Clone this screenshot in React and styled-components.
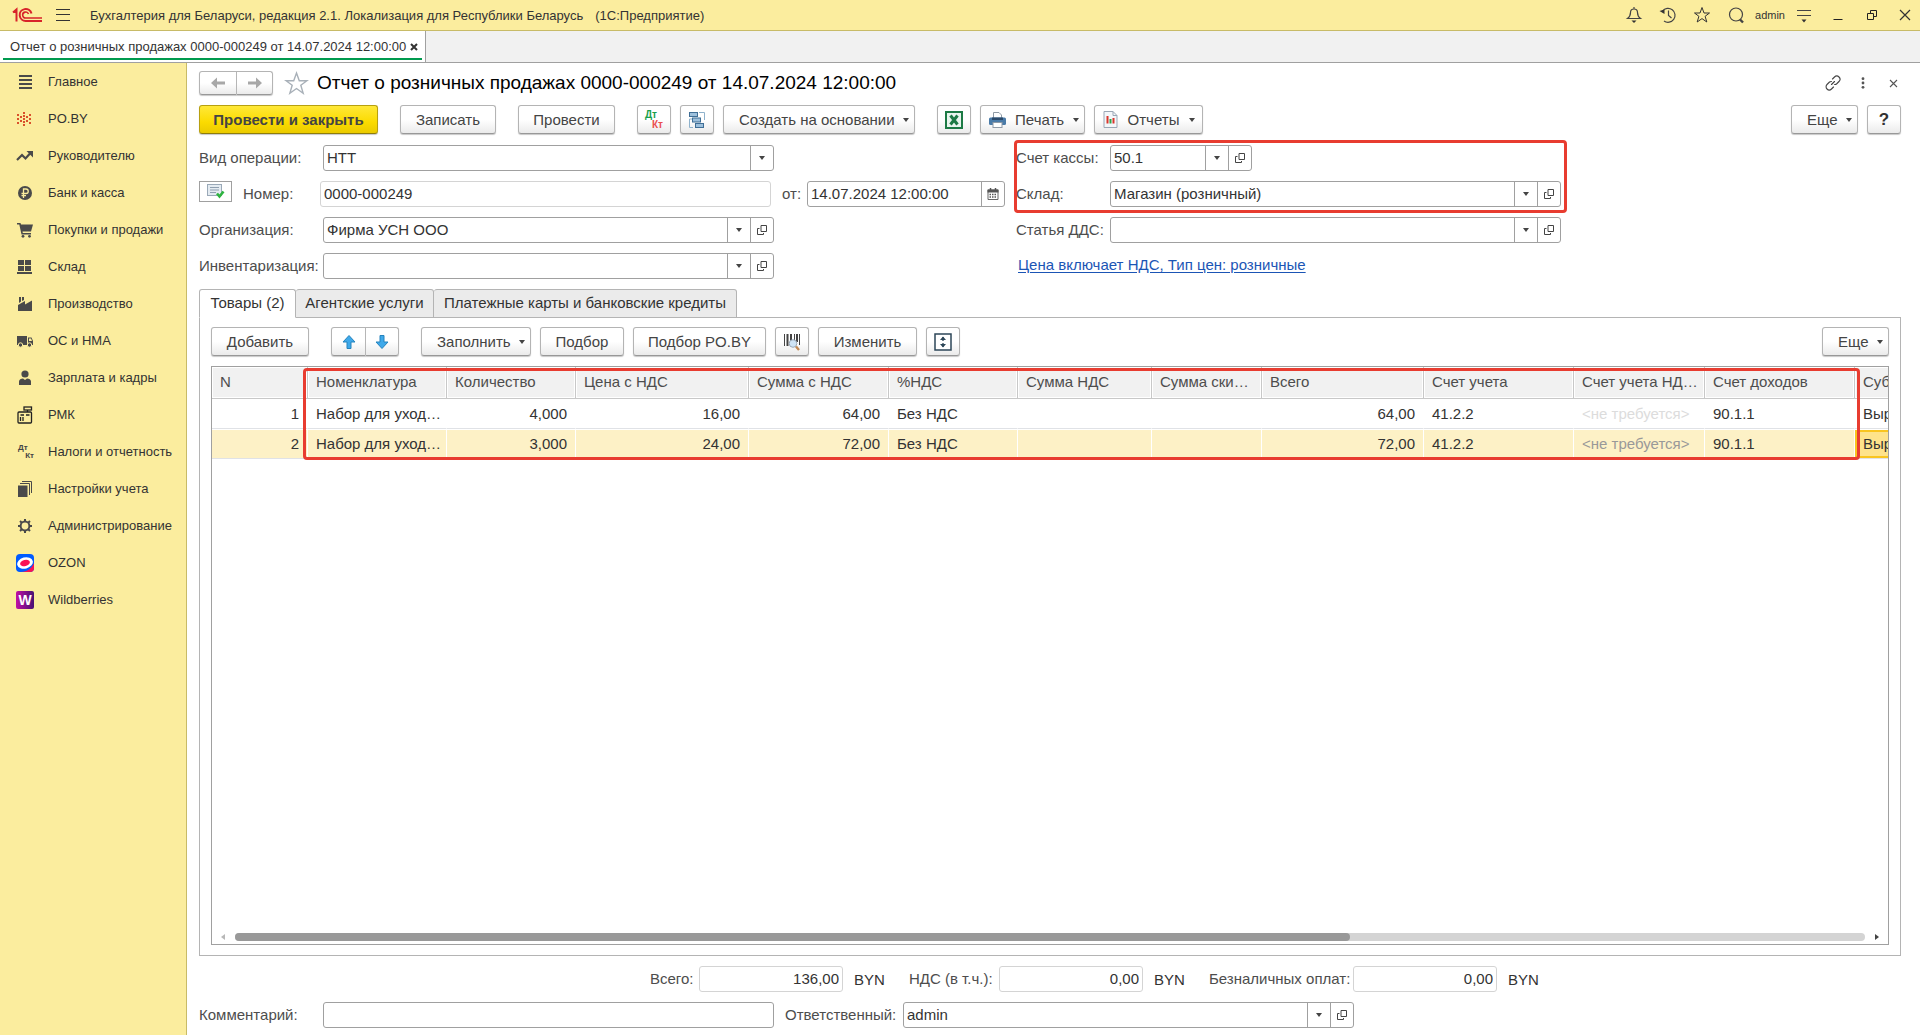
import React from 'react';
import styled, { createGlobalStyle, css } from 'styled-components';

const GlobalStyle = createGlobalStyle`
  *, *::before, *::after { box-sizing: border-box; }
  body {
    margin: 0;
    background: #fff;
    color: #333;
    font-family: "Liberation Sans", Arial, sans-serif;
    font-size: 15px;
  }
  button, input, select {
    font: inherit;
    color: inherit;
    margin: 0;
  }
  svg { display: block; flex: none; }
`;

const LINE = '#a0a0a0';
const YELLOW = '#fbed9e';
const RED = '#e83c30';

/* ---------- shell ---------- */

const Window = styled.div`
  display: flex;
  flex-direction: column;
  min-height: 100vh;
`;

const TitleBar = styled.header`
  display: flex;
  align-items: center;
  height: 31px;
  padding-left: 12px;
  background: ${YELLOW};
  border-bottom: 1px solid #c8bb67;
  font-size: 13px;
`;

const AppTitle = styled.div`
  display: flex;
  flex: 1;
  gap: 12px;
  padding-left: 10px;
  white-space: nowrap;
`;

const BarButton = styled.button`
  display: flex;
  align-items: center;
  justify-content: center;
  width: 34px;
  height: 30px;
  padding: 0;
  border: 0;
  background: none;
  font-size: 11px;
  &:last-child { width: 31px; }
`;

const MenuButton = styled(BarButton)`
  margin-left: 4px;
`;

const TabStrip = styled.nav`
  display: flex;
  height: 32px;
  background: #f1f1f1;
  border-bottom: 1px solid ${LINE};
`;

const DocTab = styled.div`
  display: flex;
  align-items: center;
  width: 426px;
  padding: 0 4px 0 7px;
  background: #fff;
  border-right: 1px solid ${LINE};
  font-size: 13px;
  white-space: nowrap;
  position: relative;
  &::after {
    content: '';
    position: absolute;
    left: 3px;
    right: 3px;
    bottom: 2px;
    height: 2px;
    background: #009a4e;
  }
`;

const DocTabLink = styled.a`
  flex: 1;
  padding-left: 3px;
  color: inherit;
  text-decoration: none;
`;

const GhostButton = styled.button`
  display: flex;
  align-items: center;
  justify-content: center;
  width: 16px;
  height: 20px;
  padding: 0;
  border: 0;
  background: none;
`;

const Body = styled.div`
  display: flex;
  flex: 1;
`;

const Sidebar = styled.nav`
  flex: none;
  width: 187px;
  background: ${YELLOW};
  border-right: 1px solid #c8bb67;
`;

const SideLink = styled.a`
  display: flex;
  align-items: center;
  gap: 14px;
  height: 37px;
  padding-left: 16px;
  color: #333;
  font-size: 13px;
  text-decoration: none;
  white-space: nowrap;
`;

const Main = styled.main`
  display: flex;
  flex: 1;
  flex-direction: column;
  gap: 10px;
  min-width: 0;
  padding: 8px 19px 7px 12px;
`;

/* ---------- header and toolbars ---------- */

const Heading = styled.div`
  display: flex;
  align-items: center;
  height: 24px;
`;

const Title = styled.h1`
  flex: 1;
  margin: 0;
  color: #000;
  font-size: 19px;
  font-weight: 400;
  white-space: nowrap;
`;

const StarButton = styled(GhostButton)`
  width: 28px;
  margin: 0 7px 0 9px;
`;

const HeadTools = styled.div`
  display: flex;
  gap: 14px;
`;

const Toolbar = styled.div`
  display: flex;
  gap: 22px;
  height: 29px;
`;

const Group = styled.div`
  display: flex;
  gap: 9px;
  margin-left: ${p => (p.$end ? 'auto' : '0')};
`;

const Button = styled.button`
  display: flex;
  align-items: center;
  justify-content: center;
  gap: ${p => (p.$icon ? '9px' : '8px')};
  width: ${p => p.$w || 34}px;
  height: ${p => p.$h || 29}px;
  padding: ${p => (p.$menu ? '0 7px 0 ' + (p.$icon ? '8px' : '15px') : '0')};
  border: 1px solid #b4b4b4;
  border-bottom-color: #989898;
  border-radius: 3px;
  background: linear-gradient(#fff 50%, #ebebeb);
  box-shadow: 0 1px 1px #c8c8c8;
  color: #444;
  white-space: nowrap;
  ${p => p.$menu && css`justify-content: space-between;`}
  ${p => p.$primary && css`
    border-color: #b7a010;
    border-bottom-color: #8f7d0a;
    background: linear-gradient(#ffe838, #fbdb00 60%, #ebcb00);
    font-weight: 700;
  `}
  ${p => p.$strong && css`font-weight: 700; font-size: 17px; color: #333;`}
`;

const Pair = styled.div`
  display: flex;
  ${Button}:first-child { border-radius: 3px 0 0 3px; }
  ${Button}:last-child { border-radius: 0 3px 3px 0; border-left: 0; }
`;

const Caret = styled.i`
  flex: none;
  border: 3px solid transparent;
  border-top: 4px solid #444;
  border-bottom: 0;
`;

/* ---------- form ---------- */

const Form = styled.form`
  display: grid;
  grid-template-columns: minmax(0, 806px) minmax(0, 545px);
  column-gap: 11px;
  margin-top: 1px;
`;

const Stack = styled.div`
  display: flex;
  flex-direction: column;
  gap: 10px;
`;

const Marked = styled(Stack)`
  position: relative;
  &::after {
    content: '';
    position: absolute;
    inset: -5px -6px -6px -2px;
    border: 3px solid ${RED};
    border-radius: 4px;
    pointer-events: none;
  }
`;

const Row = styled.div`
  display: flex;
  align-items: center;
  height: 26px;
  padding-left: ${p => p.$indent || 0}px;
`;

const Label = styled.label`
  flex: none;
  width: ${p => p.$w}px;
  padding-bottom: 1px;
  color: #4d4d4d;
  white-space: nowrap;
`;

const Field = styled.div`
  display: flex;
  flex: 0 1 ${p => p.$w || 451}px;
  min-width: 0;
  height: 26px;
  margin-right: ${p => (p.$gap ? '11px' : '0')};
  border: 1px solid ${p => (p.$soft ? '#d4d4d4' : LINE)};
  border-radius: 3px;
  background: #fff;
`;

const textBox = css`
  flex: 1;
  min-width: 0;
  width: 100%;
  padding: 0 3px 2px;
  border: 0;
  outline: 0;
  background: none;
  text-align: ${p => (p.$right ? 'right' : 'left')};
`;

const Input = styled.input`${textBox}`;

const Select = styled.select`
  ${textBox}
  appearance: none;
`;

const FieldButton = styled.button`
  display: flex;
  flex: none;
  align-items: center;
  justify-content: center;
  width: 23px;
  padding: 0 1px 0 0;
  border: 0;
  border-left: 1px solid ${LINE};
  background: none;
`;

const StatusButton = styled.button`
  display: flex;
  align-self: flex-start;
  align-items: center;
  justify-content: center;
  width: 33px;
  height: 21px;
  margin-right: 11px;
  padding: 0;
  border: 1px solid ${LINE};
  background: #fff;
`;

const PriceLink = styled.a`
  padding: 0 0 4px 2px;
  color: #1b55b5;
  text-underline-offset: 2px;
  white-space: nowrap;
`;

const Unit = styled.span`
  width: 55px;
`;

/* ---------- tabs and table ---------- */

const Section = styled.section`
  display: flex;
  flex: 1;
  flex-direction: column;
`;

const Tabs = styled.div`
  display: flex;
  height: 29px;
  margin-bottom: -1px;
`;

const Tab = styled.button`
  width: ${p => p.$w}px;
  padding: 0 0 2px;
  border: 1px solid #b4b4b4;
  border-left-width: ${p => (p.$active ? '1px' : '0')};
  border-bottom-color: ${p => (p.$active ? '#fff' : '#b4b4b4')};
  border-radius: 3px 3px 0 0;
  background: ${p => (p.$active ? '#fff' : '#ebebeb')};
  white-space: nowrap;
  z-index: 1;
`;

const Panel = styled.div`
  display: flex;
  flex: 1;
  flex-direction: column;
  gap: 10px;
  padding: 9px 11px 10px;
  border: 1px solid #b4b4b4;
`;

const Grid = styled.div`
  display: flex;
  flex: 1;
  flex-direction: column;
  justify-content: space-between;
  position: relative;
  border: 1px solid ${LINE};
`;

const Frame = styled.div`
  position: absolute;
  top: 1px;
  left: 91px;
  width: 1557px;
  height: 92px;
  border: 3px solid ${RED};
  border-radius: 4px;
  pointer-events: none;
`;

const Clip = styled.div`
  overflow: hidden;
  width: 0;
  min-width: 100%;
`;

const Table = styled.table`
  table-layout: fixed;
  width: 1763px;
  border-spacing: 0;
`;

const Th = styled.th`
  height: 32px;
  padding: 0 8px 2px;
  border-right: 1px solid #c8c8c8;
  border-bottom: 1px solid #c8c8c8;
  background: #f1f1f1;
  box-shadow: inset 0 0 0 1px #fff;
  color: #4d4d4d;
  font-weight: 400;
  text-align: left;
  white-space: nowrap;
`;

const Td = styled.td`
  height: 30px;
  padding: 0 8px 2px;
  border-top: 1px solid #fff;
  border-right: 1px solid #fff;
  border-bottom: 1px solid #e0e2e6;
  background: ${p => (p.$selected ? '#fdf1c6' : '#fff')};
  background-clip: padding-box;
  color: ${p => (p.$muted ? (p.$selected ? '#999' : '#dcdcdc') : '#333')};
  text-align: ${p => (p.$right ? 'right' : 'left')};
  white-space: nowrap;
  overflow: hidden;
  ${p => p.$current && css`
    background: #fee38b;
    box-shadow: inset 0 0 0 2px #f9c520;
  `}
`;

const Scroll = styled.div`
  display: flex;
  align-items: center;
  gap: 10px;
  height: 8px;
  margin: 0 9px 3px;
`;

const Track = styled.div`
  flex: 1;
  height: 8px;
  border-radius: 4px;
  background: #d4d4d4;
`;

const Thumb = styled.div`
  width: 68.4%;
  height: 8px;
  border-radius: 4px;
  background: #999;
`;

const Arrow = styled.i`
  border: 3px solid transparent;
  ${p => (p.$left
    ? css`border-right: 4px solid #b8b8b8; border-left: 0;`
    : css`border-left: 4px solid #444; border-right: 0;`)}
`;

const DtKt = styled.span`
  display: flex;
  flex-direction: column;
  width: 18px;
  padding-left: ${p => (p.$color ? 0 : 2)}px;
  font-size: ${p => (p.$color ? 10 : 8)}px;
  line-height: ${p => (p.$color ? 10 : 8)}px;
  font-weight: 700;
  color: ${p => (p.$color ? '#17a04c' : '#444')};
  text-align: left;
  b:last-child {
    align-self: flex-end;
    color: ${p => (p.$color ? '#ea5050' : '#444')};
  }
`;

/* ---------- icons ---------- */

const Svg = ({ s = 18, w, h, children, ...rest }) => (
  <svg width={w || s} height={h || s} viewBox={`0 0 ${w || s} ${h || s}`} fill="none" stroke="#444" aria-hidden="true" {...rest}>
    {children}
  </svg>
);

const Logo = () => (
  <Svg w={30} h={16} stroke="#d8232a" strokeWidth="2">
    <path d="M1 5.500 4.500 2.500V14.500M1.500 5H4" />
    <path d="M19.500 6.500A6 6 0 1 0 14 14H30" />
    <path d="M16.500 7A3 3 0 1 0 14 11H30" strokeWidth="1.600" />
  </Svg>
);

const Burger = () => (
  <Svg w={14} h={12} stroke="#333"><path d="M0 .5H14M0 5.500H14M0 11.500H14" /></Svg>
);

const Bell = () => (
  <Svg s={18} strokeWidth="1.200">
    <path d="M2.500 12.500C4.500 11 5.500 9.500 5.500 6.500 5.500 4.500 7 3 9 3S12.500 4.500 12.500 6.500C12.500 9.500 13.500 11 15.500 12.500ZM9 1V3" />
    <path d="M6.500 14.500H11.500L9 17Z" fill="#333" stroke="none" />
  </Svg>
);

const History = () => (
  <Svg s={18} strokeWidth="1.200">
    <path d="M3.500 5A7 7 0 1 1 5 15M9.500 4.500V9.500L12.500 12" />
    <path d="M.5 5 5.500 3.500V8Z" fill="#333" stroke="none" />
  </Svg>
);

const Star = ({ s = 18, color = '#333' }) => (
  <svg width={s} height={s} viewBox="0 0 18 18" fill="none" stroke={color} strokeWidth="1" aria-hidden="true">
    <path d="M9 1.500 11 7H16.500L12.100 10.300 13.800 16 9 12.600 4.200 16 5.900 10.300 1.500 7H7Z" />
  </svg>
);

const Search = () => (
  <Svg s={18}>
    <circle cx="9" cy="8.500" r="6.500" strokeWidth="1.200" />
    <path d="M13 13.500 16 16.500" strokeWidth="2.400" />
  </Svg>
);

const Settings = () => (
  <Svg w={16} h={16}>
    <path d="M1 3.500H15M1 8.500H15" strokeWidth="1.200" />
    <path d="M5.500 12.500H10.500L8 15.500Z" fill="#333" stroke="none" />
  </Svg>
);

const Minimize = () => <Svg s={12} stroke="#222"><path d="M1.500 10.500H10.500" /></Svg>;
const Restore = () => (
  <Svg s={12} stroke="#222"><path d="M1.500 4.500H7.500V10.500H1.500ZM4.500 4.500V1.500H10.500V7.500H7.500" /></Svg>
);
const Cross = ({ s = 12, sw = 1.2, color = '#333' }) => (
  <Svg s={s} stroke={color} strokeWidth={sw}><path d={`M1 1 ${s - 1} ${s - 1}M${s - 1} 1 1 ${s - 1}`} /></Svg>
);

const LinkIcon = () => (
  <Svg s={16} strokeWidth="1.100" strokeLinecap="round">
    <path d="M7.500 4 9.500 2A3 3 0 0 1 14 6.500L11.500 9A3 3 0 0 1 9.500 9.500M8.500 12 6.500 14A3 3 0 0 1 2 9.500L4.500 7A3 3 0 0 1 6.500 6.500M6.500 9.500 9.500 6.500" />
  </Svg>
);

const Dots = () => (
  <Svg w={4} h={12} fill="#555" stroke="none">
    <circle cx="2" cy="1.700" r="1.400" /><circle cx="2" cy="6" r="1.400" /><circle cx="2" cy="10.300" r="1.400" />
  </Svg>
);

const ArrowIcon = ({ right }) => (
  <Svg w={14} h={12} fill="#a8a8a8" stroke="none">
    <path d={right ? 'M14 6 8 .5V4.500H0V7.500H8V11.500Z' : 'M0 6 6 .5V4.500H14V7.500H6V11.500Z'} />
  </Svg>
);

const MoveIcon = ({ down }) => (
  <Svg s={14} fill="#3fa9ea" stroke="#2583bd">
    <path d={down ? 'M5 .5H9V7H13L7 13.500 1 7H5Z' : 'M5 13.500H9V7H13L7 .5 1 7H5Z'} />
  </Svg>
);

const Structure = () => (
  <Svg s={18} stroke="#3f6e96">
    <path d="M4 8H1.500V16.500H5M11 1.500H16.500V9" stroke="#8fb2cc" />
    <rect x="1.500" y="1.500" width="8" height="4" fill="#9dc0dc" />
    <rect x="4.500" y="7" width="8" height="4" fill="#9dc0dc" />
    <rect x="7.500" y="12.500" width="8" height="4" fill="#9dc0dc" />
  </Svg>
);

const ExcelIcon = () => (
  <Svg s={18}>
    <rect x="1" y="1" width="16" height="16" fill="#e9f5ee" stroke="#1c7a45" strokeWidth="2" />
    <path d="M5.500 4.500 12.500 13.500M12.500 4.500 5.500 13.500" stroke="#1c7a45" strokeWidth="3" />
  </Svg>
);

const Printer = () => (
  <Svg w={17} h={16} stroke="none">
    <path d="M4.500 .5H10L12.500 3V7H4.500Z" fill="#fff" stroke="#8f9aa5" />
    <rect x="0" y="5.500" width="17" height="7.500" rx="1.500" fill="#4a7ba8" />
    <rect x="3" y="5.500" width="11" height="2.500" fill="#2b4a6b" />
    <rect x="4" y="10.500" width="9" height="5" fill="#fff" stroke="#8f9aa5" />
  </Svg>
);

const Report = () => (
  <Svg w={15} h={17}>
    <path d="M1 .5H10L14 4.500V16.500H1Z" fill="#f4f7fa" stroke="#9aa7b5" />
    <path d="M10 .5V4.500H14" stroke="#9aa7b5" />
    <path d="M4.500 5V12.500M10.500 7V12.500" stroke="#d9362c" strokeWidth="2" />
    <path d="M7.500 8V12.500" stroke="#2da44e" strokeWidth="2" />
  </Svg>
);

const Posted = () => (
  <Svg w={18} h={15}>
    <rect x=".5" y=".5" width="14" height="11" fill="#e4ebf1" stroke="#9aa9b8" />
    <path d="M3 3.500H12M3 6H12M3 8.500H9" stroke="#8f9fb0" />
    <path d="M10 9.500 12.500 12.500 16.500 7.500" stroke="#2eb440" strokeWidth="2.600" />
  </Svg>
);

const OpenIcon = () => (
  <Svg s={12}><path d="M5 1.500H10.500V7.500H5ZM3.500 4.500H1.500V10.500H7.500V9" /></Svg>
);

const Calendar = () => (
  <Svg w={12} h={12}>
    <path d="M1 2H11V11.500H1Z" stroke="#666" fill="#fff" />
    <path d="M.5 3H11.500" stroke="#555" strokeWidth="3" />
    <path d="M3.500 0V3M8.500 0V3" stroke="#555" strokeWidth="1.500" />
    <path d="M2.500 6.500H10M2.500 9H10" stroke="#555" strokeWidth="1.300" strokeDasharray="1.500 1" />
  </Svg>
);

const Barcode = () => (
  <Svg s={18}>
    <path d="M1.500 1V13M11.500 1V9M16.500 1V12" strokeWidth="1" />
    <path d="M4.500 1V13M8 1V9M14 1V9" strokeWidth="2" />
    <circle cx="10" cy="10.500" r="3.800" fill="#cfe4f5" stroke="#9aa9b8" />
    <path d="M13 13.500 16 17" stroke="#c28a56" strokeWidth="2.400" />
  </Svg>
);

const Expand = () => (
  <Svg s={18} stroke="#2d4658">
    <rect x="1" y="1" width="16" height="16" fill="#fff" strokeWidth="1.500" />
    <path d="M9 4V8M9 10V14" strokeWidth="1.300" />
    <path d="M6 7 9 3.500 12 7ZM6 11 9 14.500 12 11Z" fill="#2d4658" stroke="none" />
  </Svg>
);

const D = '#4a4a4a';
const sideIcons = {
  list: <Svg><path d="M3 3H16M3 7H16M3 11H16M3 15H16" stroke={D} strokeWidth="2" /></Svg>,
  burst: (
    <Svg stroke="none" fill="#d9512c">
      {[[7, 2], [7, 5], [7, 8], [7, 11], [7, 14], [4, 6], [4, 10], [10, 6], [10, 10], [1, 4], [1, 8], [1, 12], [13, 4], [13, 8], [13, 12]].map(([x, y]) => (
        <rect key={`${x}-${y}`} x={x} y={y} width="2" height="2" />
      ))}
    </Svg>
  ),
  trend: (
    <Svg>
      <path d="M1 13 6 8 9.500 11.500 14 6.500" stroke={D} strokeWidth="2.200" />
      <path d="M10.500 4H17V10.500Z" fill={D} stroke="none" />
    </Svg>
  ),
  ruble: (
    <Svg>
      <circle cx="9" cy="9" r="7" fill={D} stroke="none" />
      <path d="M7.500 14V5H10A2.200 2.200 0 0 1 10 9.500H5.500M5.500 11.700H10" stroke={YELLOW} strokeWidth="1.300" />
    </Svg>
  ),
  cart: (
    <Svg stroke="none" fill={D}>
      <path d="M1 2H4.500L5 3.500H17L15 10.500H6.500L6.800 12H15V13.500H5.500L3.300 3.500H1Z" />
      <circle cx="7" cy="15.300" r="1.400" /><circle cx="13.500" cy="15.300" r="1.400" />
    </Svg>
  ),
  store: <Svg stroke="none" fill={D}><path d="M2 2H8V7H2ZM9 2H15V7H9ZM2 8H8V13H2ZM9 8H15V13H9ZM1 14H16V16H1Z" /></Svg>,
  factory: <Svg stroke="none" fill={D}><path d="M2 16V10L9 6V9.500L16 5.500V16ZM3 2H5V6.500L3 8ZM6 2H8V5L6 6Z" /></Svg>,
  truck: (
    <Svg stroke="none" fill={D}>
      <path d="M1 4H11V13H1ZM12 5.500H15.500L17 9V13H12Z" />
      <path d="M13 6.500H15L16 9H13Z" fill={YELLOW} />
      <circle cx="4.500" cy="13" r="2.200" stroke={YELLOW} /><circle cx="13.500" cy="13" r="2.200" stroke={YELLOW} />
    </Svg>
  ),
  person: <Svg stroke="none" fill={D}><circle cx="9" cy="5" r="3.600" /><path d="M3 16V12.500C3 10.500 5 9.800 7 9.500L9 11 11 9.500C13 9.800 15 10.500 15 12.500V16Z" /></Svg>,
  register: (
    <Svg stroke="#222" strokeWidth="1.300">
      <rect x="2" y="6" width="13.500" height="11" rx="1" /><rect x="8" y="1" width="7.500" height="3" /><path d="M11.500 4V6M4.500 9H8M4.500 11V15M7 11V15M10 9H13.500" />
    </Svg>
  ),
  dtkt: <DtKt><b>Дт</b><b>Кт</b></DtKt>,
  books: <Svg stroke={D}><rect x="2" y="5.500" width="9.500" height="11.500" fill={D} stroke="none" /><path d="M4 3.500H13.500V15M6 1.500H15.500V13" /></Svg>,
  gear: (
    <Svg stroke={D}>
      <circle cx="9" cy="9" r="4.400" strokeWidth="2" />
      <path d="M9 2V4.500M9 13.500V16M2 9H4.500M13.500 9H16M4 4 5.800 5.800M12.200 12.200 14 14M14 4 12.200 5.800M5.800 12.200 4 14" strokeWidth="2" />
    </Svg>
  ),
  ozon: (
    <Svg stroke="none">
      <rect width="18" height="18" rx="4" fill="#005bff" />
      <path d="M5 18C11 18 16 14 18 9V14A4 4 0 0 1 14 18Z" fill="#f91155" />
      <ellipse cx="9" cy="9" rx="8" ry="5.600" fill="#fff" transform="rotate(-15 9 9)" />
      <ellipse cx="9" cy="9" rx="5" ry="3" fill="#f91155" transform="rotate(-15 9 9)" />
    </Svg>
  ),
  wb: (
    <Svg stroke="none">
      <defs><linearGradient id="wb" x1="0" x2="1"><stop stopColor="#c010a4" /><stop offset="1" stopColor="#481173" /></linearGradient></defs>
      <rect width="18" height="18" rx="2" fill="url(#wb)" />
      <text x="9" y="14" fill="#fff" fontSize="14" fontWeight="700" textAnchor="middle">W</text>
    </Svg>
  ),
};

/* ---------- data ---------- */

const sections = [
  ['list', 'Главное'], ['burst', 'PO.BY'], ['trend', 'Руководителю'], ['ruble', 'Банк и касса'],
  ['cart', 'Покупки и продажи'], ['store', 'Склад'], ['factory', 'Производство'], ['truck', 'ОС и НМА'],
  ['person', 'Зарплата и кадры'], ['register', 'РМК'], ['dtkt', 'Налоги и отчетность'],
  ['books', 'Настройки учета'], ['gear', 'Администрирование'], ['ozon', 'OZON'], ['wb', 'Wildberries'],
];

const columns = [
  { title: 'N', w: 96, right: true }, { title: 'Номенклатура', w: 139 }, { title: 'Количество', w: 129, right: true },
  { title: 'Цена с НДС', w: 173, right: true }, { title: 'Сумма с НДС', w: 140, right: true }, { title: '%НДС', w: 129 },
  { title: 'Сумма НДС', w: 134, right: true }, { title: 'Сумма ски…', w: 110, right: true }, { title: 'Всего', w: 162, right: true },
  { title: 'Счет учета', w: 150 }, { title: 'Счет учета НД…', w: 131, muted: true }, { title: 'Счет доходов', w: 150 },
  { title: 'Субконто', w: 120 },
];

const rows = [
  ['1', 'Набор для уход…', '4,000', '16,00', '64,00', 'Без НДС', '', '', '64,00', '41.2.2', '<не требуется>', '90.1.1', 'Выручка'],
  ['2', 'Набор для уход…', '3,000', '24,00', '72,00', 'Без НДС', '', '', '72,00', '41.2.2', '<не требуется>', '90.1.1', 'Выручка'],
];

const DOC = 'Отчет о розничных продажах 0000-000249 от 14.07.2024 12:00:00';

/* ---------- composed controls ---------- */

function Combo({ id, value = '', w, gap }) {
  return (
    <Field $w={w} $gap={gap}>
      <Input id={id} defaultValue={value} />
      <FieldButton type="button" aria-label="Выбрать"><Caret /></FieldButton>
      <FieldButton type="button" aria-label="Открыть"><OpenIcon /></FieldButton>
    </Field>
  );
}

function MenuBtn({ icon, w, children }) {
  return (
    <Button type="button" $menu $icon={!!icon} $w={w}>{icon}{children}<Caret /></Button>
  );
}

function Total({ id, label, lw, value }) {
  return (
    <>
      <Label htmlFor={id} $w={lw}>{label}</Label>
      <Field $w={144} $gap $soft><Input id={id} $right readOnly value={value} /></Field>
      <Unit>BYN</Unit>
    </>
  );
}

export default function App() {
  return (
    <Window>
      <GlobalStyle />
      <TitleBar>
        <Logo />
        <MenuButton aria-label="Меню"><Burger /></MenuButton>
        <AppTitle>
          <span>Бухгалтерия для Беларуси, редакция 2.1. Локализация для Республики Беларусь</span>
          <span>(1С:Предприятие)</span>
        </AppTitle>
        <BarButton aria-label="Оповещения"><Bell /></BarButton>
        <BarButton aria-label="История"><History /></BarButton>
        <BarButton aria-label="Избранное"><Star s={18} /></BarButton>
        <BarButton aria-label="Поиск"><Search /></BarButton>
        <BarButton>admin</BarButton>
        <BarButton aria-label="Настройки"><Settings /></BarButton>
        <BarButton aria-label="Свернуть"><Minimize /></BarButton>
        <BarButton aria-label="Восстановить"><Restore /></BarButton>
        <BarButton aria-label="Закрыть"><Cross /></BarButton>
      </TitleBar>

      <TabStrip>
        <DocTab>
          <DocTabLink href="#doc">{DOC}</DocTabLink>
          <GhostButton aria-label="Закрыть вкладку"><Cross s={8} sw={2} /></GhostButton>
        </DocTab>
      </TabStrip>

      <Body>
        <Sidebar>
          {sections.map(([icon, text]) => (
            <SideLink key={text} href={`#${icon}`}>{sideIcons[icon]}{text}</SideLink>
          ))}
        </Sidebar>

        <Main>
          <Heading>
            <Pair>
              <Button type="button" aria-label="Назад" $w={38} $h={24}><ArrowIcon /></Button>
              <Button type="button" aria-label="Вперед" $w={36} $h={24}><ArrowIcon right /></Button>
            </Pair>
            <StarButton aria-label="В избранное"><Star s={25} color="#a8b0b8" /></StarButton>
            <Title>{DOC}</Title>
            <HeadTools>
              <GhostButton aria-label="Ссылка"><LinkIcon /></GhostButton>
              <GhostButton aria-label="Действия"><Dots /></GhostButton>
              <GhostButton aria-label="Закрыть"><Cross s={9} sw={1.1} color="#555" /></GhostButton>
            </HeadTools>
          </Heading>

          <Toolbar>
            <Button type="button" $primary $w={179}>Провести и закрыть</Button>
            <Button type="button" $w={96}>Записать</Button>
            <Button type="button" $w={97}>Провести</Button>
            <Group>
              <Button type="button" aria-label="Движения документа"><DtKt $color><b>Дт</b><b>Кт</b></DtKt></Button>
              <Button type="button" aria-label="Структура подчиненности"><Structure /></Button>
              <MenuBtn w={192}>Создать на основании</MenuBtn>
            </Group>
            <Group>
              <Button type="button" aria-label="Excel"><ExcelIcon /></Button>
              <MenuBtn icon={<Printer />} w={105}>Печать</MenuBtn>
              <MenuBtn icon={<Report />} w={109}>Отчеты</MenuBtn>
            </Group>
            <Group $end>
              <MenuBtn w={67}>Еще</MenuBtn>
              <Button type="button" $strong>?</Button>
            </Group>
          </Toolbar>

          <Form>
            <Stack>
              <Row>
                <Label htmlFor="kind" $w={124}>Вид операции:</Label>
                <Field>
                  <Select id="kind" defaultValue="НТТ"><option>НТТ</option></Select>
                  <FieldButton type="button" aria-label="Выбрать"><Caret /></FieldButton>
                </Field>
              </Row>
              <Row>
                <StatusButton type="button" aria-label="Проведен"><Posted /></StatusButton>
                <Label htmlFor="number" $w={77}>Номер:</Label>
                <Field $gap $soft><Input id="number" defaultValue="0000-000249" /></Field>
                <Label htmlFor="date" $w={25}>от:</Label>
                <Field $w={198}>
                  <Input id="date" defaultValue="14.07.2024 12:00:00" />
                  <FieldButton type="button" aria-label="Календарь"><Calendar /></FieldButton>
                </Field>
              </Row>
              <Row>
                <Label htmlFor="org" $w={124}>Организация:</Label>
                <Combo id="org" value="Фирма УСН ООО" />
              </Row>
              <Row>
                <Label htmlFor="inv" $w={124}>Инвентаризация:</Label>
                <Combo id="inv" />
              </Row>
            </Stack>
            <Stack>
              <Marked>
                <Row>
                  <Label htmlFor="cash" $w={94}>Счет кассы:</Label>
                  <Combo id="cash" value="50.1" w={142} />
                </Row>
                <Row>
                  <Label htmlFor="store" $w={94}>Склад:</Label>
                  <Combo id="store" value="Магазин (розничный)" />
                </Row>
              </Marked>
              <Row>
                <Label htmlFor="dds" $w={94}>Статья ДДС:</Label>
                <Combo id="dds" />
              </Row>
              <Row><PriceLink href="#prices">Цена включает НДС, Тип цен: розничные</PriceLink></Row>
            </Stack>
          </Form>

          <Section>
            <Tabs role="tablist">
              <Tab role="tab" $active $w={97}>Товары (2)</Tab>
              <Tab role="tab" $w={138}>Агентские услуги</Tab>
              <Tab role="tab" $w={303}>Платежные карты и банковские кредиты</Tab>
            </Tabs>
            <Panel>
              <Toolbar>
                <Button type="button" $w={98}>Добавить</Button>
                <Pair>
                  <Button type="button" aria-label="Переместить вверх" $w={35}><MoveIcon /></Button>
                  <Button type="button" aria-label="Переместить вниз" $w={33}><MoveIcon down /></Button>
                </Pair>
                <Group>
                  <MenuBtn w={110}>Заполнить</MenuBtn>
                  <Button type="button" $w={84}>Подбор</Button>
                  <Button type="button" $w={133}>Подбор PO.BY</Button>
                  <Button type="button" aria-label="Поиск по штрихкоду"><Barcode /></Button>
                  <Button type="button" $w={99}>Изменить</Button>
                  <Button type="button" aria-label="Развернуть"><Expand /></Button>
                </Group>
                <Group $end><MenuBtn w={67}>Еще</MenuBtn></Group>
              </Toolbar>

              <Grid>
                <Clip>
                  <Table>
                    <colgroup>{columns.map(c => <col key={c.title} width={c.w} />)}</colgroup>
                    <thead>
                      <tr>{columns.map(c => <Th key={c.title}>{c.title}</Th>)}</tr>
                    </thead>
                    <tbody>
                      {rows.map((row, r) => (
                        <tr key={row[0]}>
                          {row.map((cell, i) => (
                            <Td
                              key={columns[i].title}
                              $right={columns[i].right}
                              $muted={columns[i].muted}
                              $selected={r === 1}
                              $current={r === 1 && i === row.length - 1}
                            >
                              {cell}
                            </Td>
                          ))}
                        </tr>
                      ))}
                    </tbody>
                  </Table>
                </Clip>
                <Frame />
                <Scroll>
                  <Arrow $left />
                  <Track><Thumb /></Track>
                  <Arrow />
                </Scroll>
              </Grid>
            </Panel>
          </Section>

          <Row $indent={451}>
            <Total id="sum" label="Всего:" lw={49} value="136,00" />
            <Total id="vat" label="НДС (в т.ч.):" lw={90} value="0,00" />
            <Total id="cashless" label="Безналичных оплат:" lw={144} value="0,00" />
          </Row>
          <Row>
            <Label htmlFor="comment" $w={124}>Комментарий:</Label>
            <Field $gap><Input id="comment" /></Field>
            <Label htmlFor="owner" $w={118}>Ответственный:</Label>
            <Combo id="owner" value="admin" />
          </Row>
        </Main>
      </Body>
    </Window>
  );
}
